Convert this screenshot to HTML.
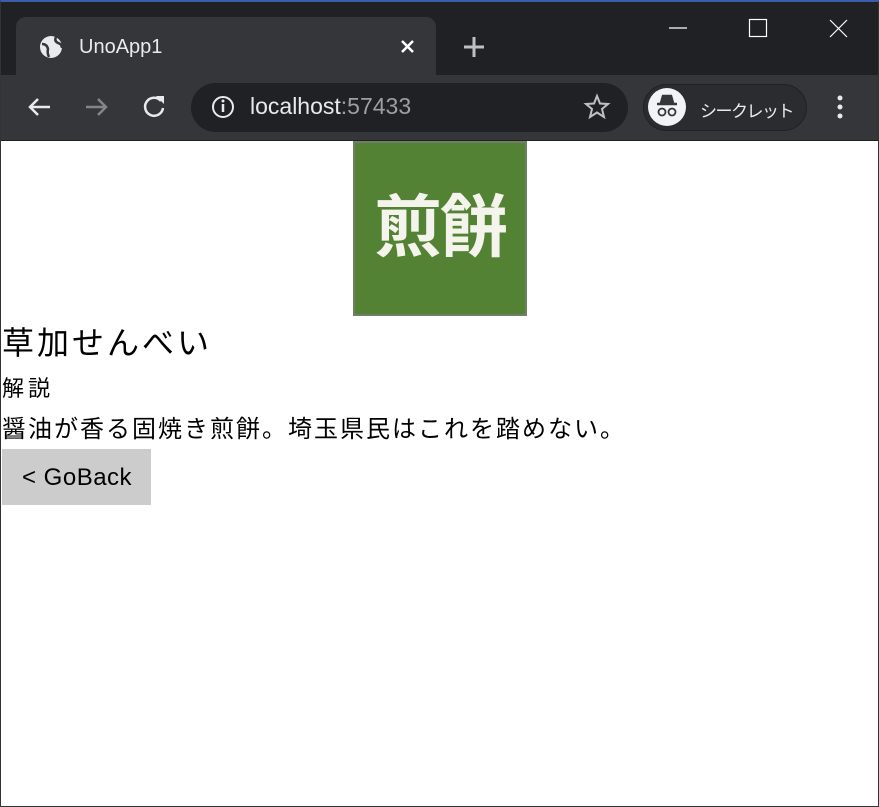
<!DOCTYPE html>
<html><head><meta charset="utf-8"><style>
*{margin:0;padding:0;box-sizing:border-box}
body{width:879px;height:807px;overflow:hidden;background:#fff;font-family:"Liberation Sans","Noto Sans CJK JP",sans-serif;position:relative}
.frame{position:absolute;left:0;top:0;width:879px;height:807px;border:1px solid #333;border-top:2px solid #3a5fa8;pointer-events:none}
.top{position:absolute;left:0;top:0;width:879px;height:141px;background:#202124}
.tab{position:absolute;left:16px;top:17px;width:420px;height:60px;background:#35363a;border-radius:10px 10px 0 0}
.toolbar{position:absolute;left:0;top:75px;width:879px;height:65px;background:#35363a}
.addr{position:absolute;left:191px;top:83px;width:437px;height:49px;background:#202124;border-radius:25px}
.pill{position:absolute;left:643px;top:84px;width:164px;height:47px;border:1px solid #202124;background:#2b2c2f;border-radius:24px}
.t{position:absolute;color:#e8eaed;white-space:nowrap}
</style></head><body>
<div class="top"></div>
<div class="tab"></div>
<div class="toolbar"></div>
<div class="addr"></div>
<div class="pill"></div>
<svg style="position:absolute;left:0;top:0" width="879" height="141">
 <circle cx="51" cy="47" r="11" fill="#e8eaed"/>
 <path d="M42 44 q5 0 6 5 q-1 4 1 8 M56 37 q-2 4 2 6 q4 1 4 5" stroke="#35363a" stroke-width="2.5" fill="none"/>
 <path d="M402 41 l11 11 M413 41 l-11 11" stroke="#fff" stroke-width="2.5"/>
 <path d="M474 37 v20 M464 47 h20" stroke="#bdc1c6" stroke-width="3"/>
 <path d="M669 28 h18" stroke="#fff" stroke-width="1.2"/>
 <rect x="749.5" y="19.5" width="17" height="17" stroke="#fff" fill="none" stroke-width="1.2"/>
 <path d="M830 20 l17 17 M847 20 l-17 17" stroke="#fff" stroke-width="1.2"/>
 <path d="M50 107 h-20 M38 99 l-8 8 l8 8" stroke="#e8eaed" stroke-width="2.5" fill="none"/>
 <path d="M86 107 h20 M98 99 l8 8 l-8 8" stroke="#80868b" stroke-width="2.5" fill="none"/>
 <path d="M161 101 a9 9 0 1 0 2 7" stroke="#e8eaed" stroke-width="2.5" fill="none"/>
 <path d="M156 96 h8 v8 z" fill="#e8eaed"/>
 <circle cx="223" cy="107" r="10" stroke="#e8eaed" stroke-width="2" fill="none"/>
 <path d="M223 104 v8" stroke="#e8eaed" stroke-width="2.5"/><circle cx="223" cy="101" r="1.5" fill="#e8eaed"/>
 <path d="M597 96 l3 7.5 l8 .5 l-6 5 l2 8 l-7 -4.5 l-7 4.5 l2 -8 l-6 -5 l8 -.5 z" stroke="#bdc1c6" stroke-width="2" fill="none"/>
 <circle cx="667" cy="107" r="19" fill="#f1f3f4"/>
 <path d="M657 104 h20 M661 103 l2 -7 h8 l2 7" stroke="#35363a" stroke-width="2.5" fill="#35363a"/>
 <circle cx="662" cy="112" r="3.5" stroke="#35363a" stroke-width="1.8" fill="none"/>
 <circle cx="672" cy="112" r="3.5" stroke="#35363a" stroke-width="1.8" fill="none"/>
 <circle cx="840" cy="98" r="2.5" fill="#e8eaed"/><circle cx="840" cy="107" r="2.5" fill="#e8eaed"/><circle cx="840" cy="116" r="2.5" fill="#e8eaed"/>
</svg>
<div class="t" style="left:79px;top:36px;font-size:20px">UnoApp1</div>
<div class="t" style="left:250px;top:93px;font-size:23px">localhost<span style="color:#9aa0a6">:57433</span></div>
<div class="t" style="left:700px;top:97px;font-size:17px;letter-spacing:-1.5px">シークレット</div>

<div style="position:absolute;left:353px;top:141px;width:174px;height:175px;background:#538234;border:2px solid #6f7f63;color:#f4f4ec;font-size:68px;font-weight:bold;line-height:170px;text-align:center;letter-spacing:-2px">煎餅</div>
<div style="position:absolute;left:2px;top:318px;font-size:32px;letter-spacing:3px;color:#000">草加せんべい</div>
<div style="position:absolute;left:2px;top:371px;font-size:22px;letter-spacing:4px;color:#000">解説</div>
<div style="position:absolute;left:2px;top:409px;font-size:24px;letter-spacing:2px;color:#000;white-space:nowrap">醤油が香る固焼き煎餅。埼玉県民はこれを踏めない。</div>
<div style="position:absolute;left:2px;top:449px;width:149px;height:56px;background:#cccccc;font-size:24px;line-height:58px;padding-left:20px;letter-spacing:0.5px;color:#000">&lt; GoBack</div>
<div class="frame"></div>
</body></html>
